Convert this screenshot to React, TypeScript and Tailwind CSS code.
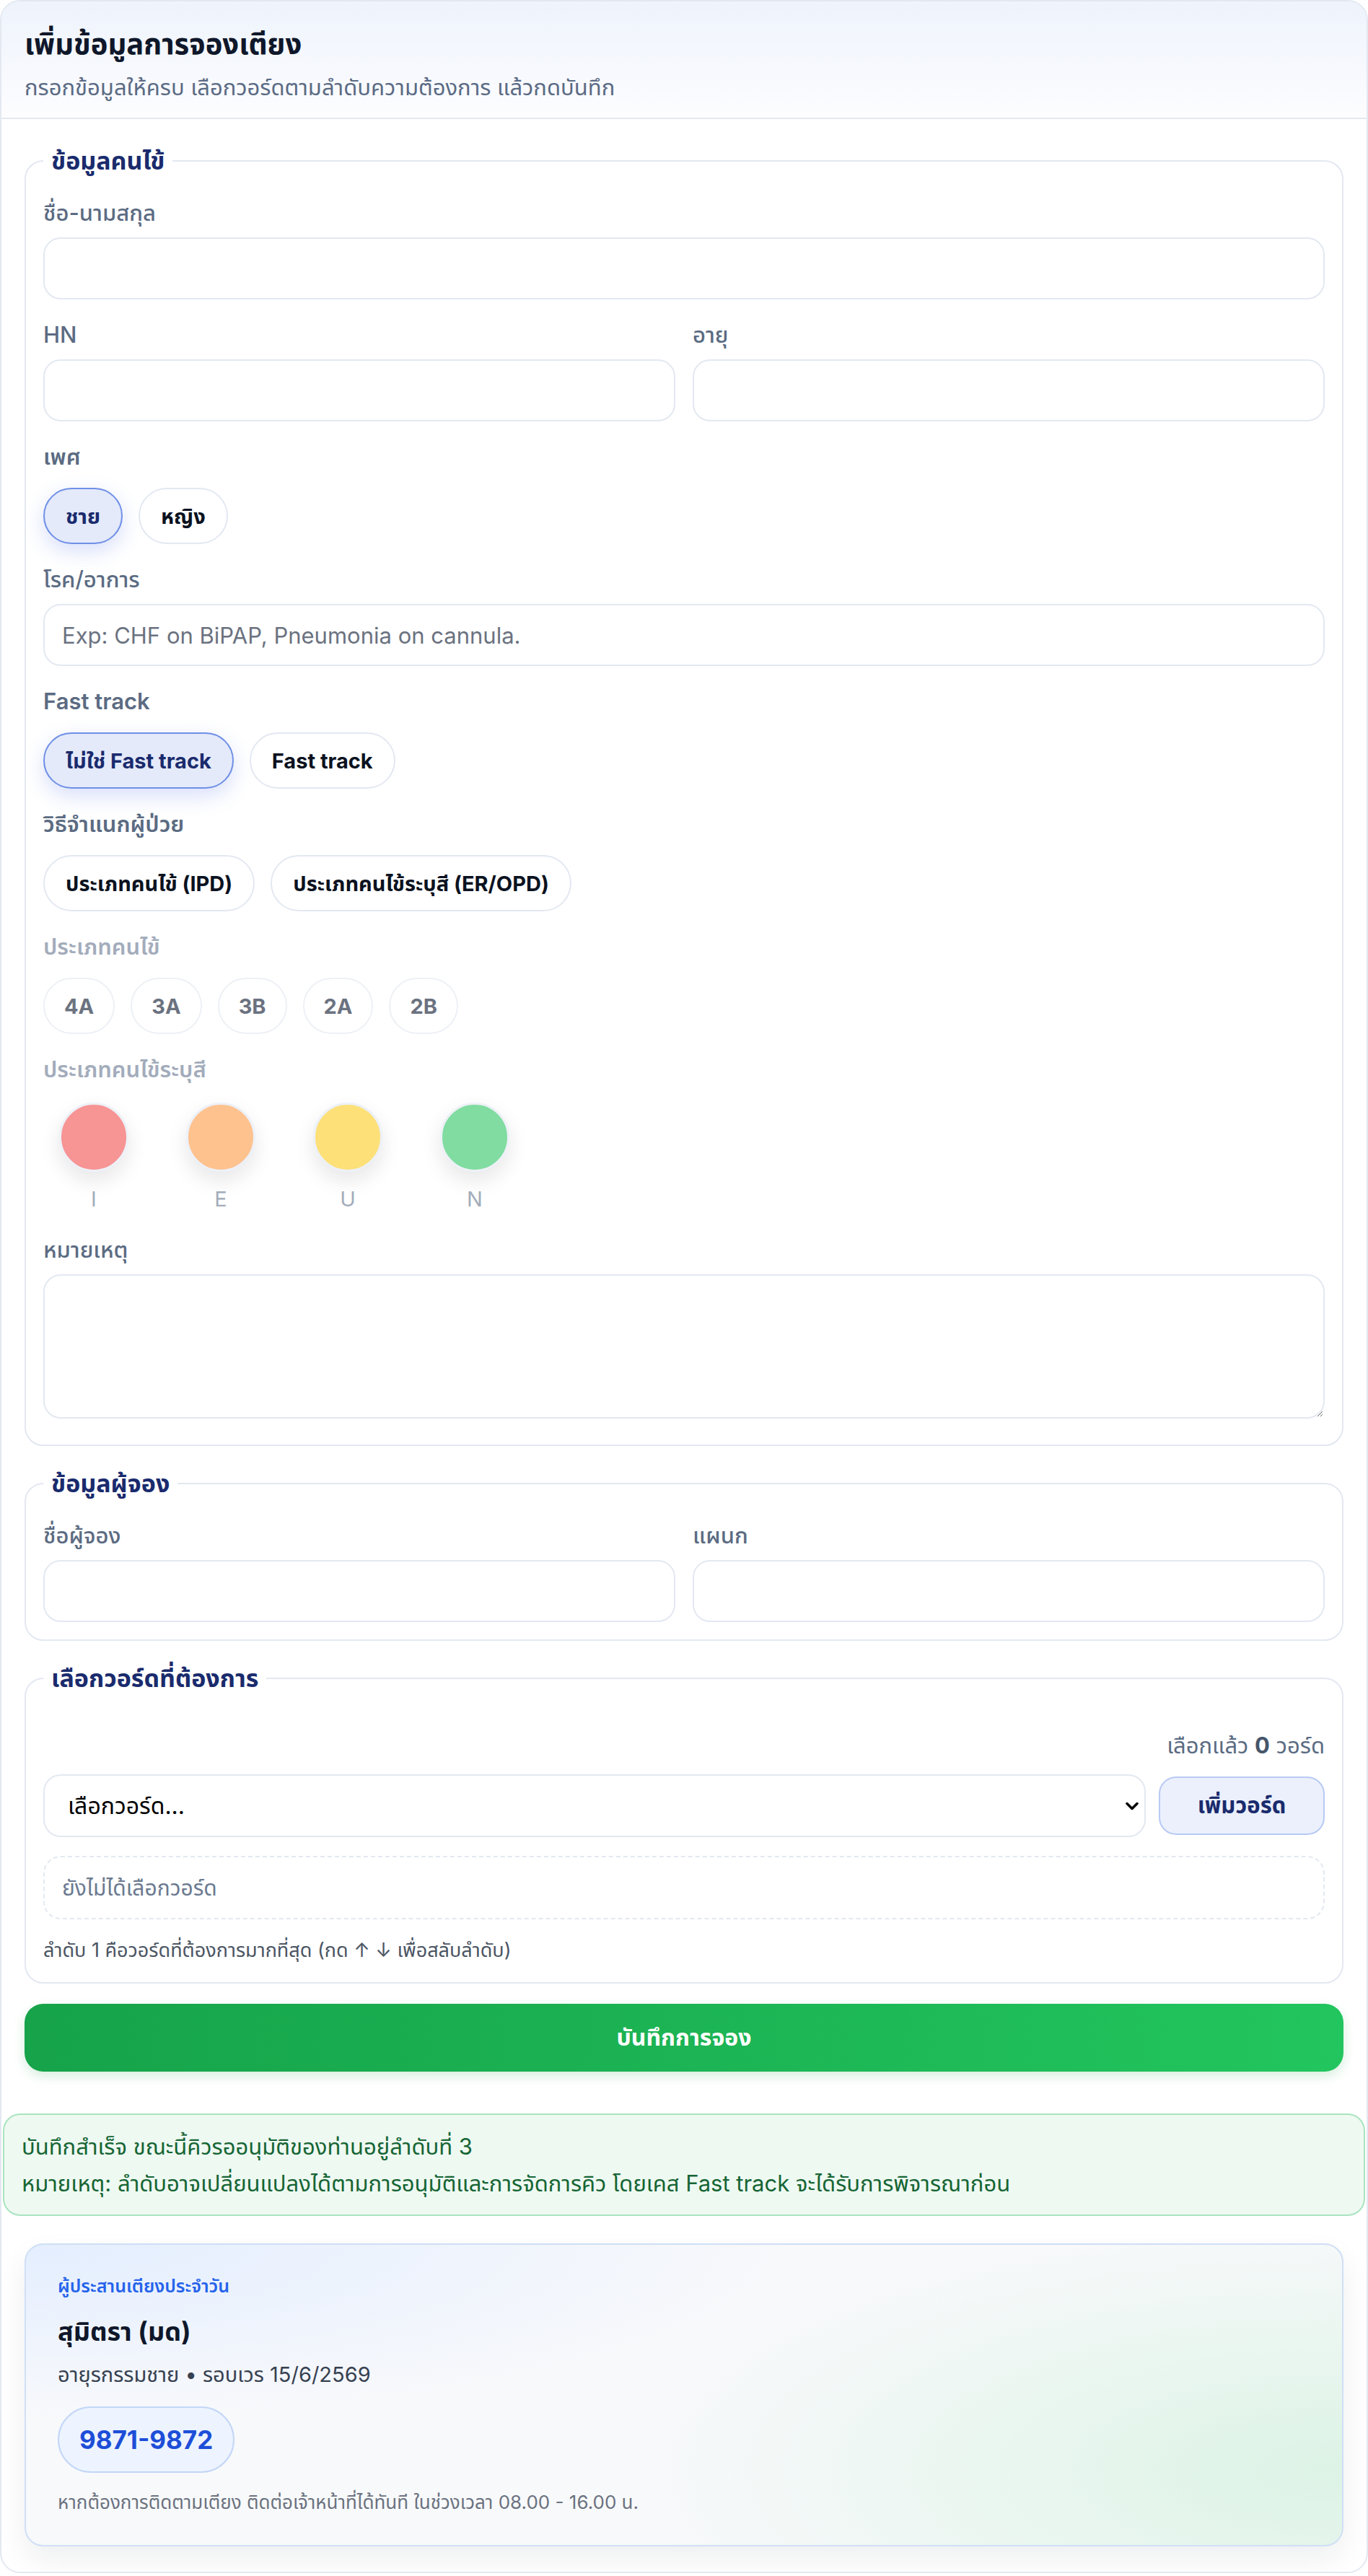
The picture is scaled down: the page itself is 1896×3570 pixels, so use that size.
import React from "react";

const FONT = "font-['Inter','Noto_Sans_Thai','Noto_Sans','Liberation_Sans',sans-serif]";

const fieldLabel = "block text-[31px] leading-[45px] font-medium text-[#5b6b82]";
const groupLabel = "block text-[31px] leading-[45px] font-semibold text-[#5b6b82]";
const mutedLabel = "block text-[31px] leading-[45px] font-semibold text-[#a3acbb]";
const inputCls =
  "block w-full h-[86px] rounded-[24px] border-2 border-[#e3e8f1] bg-white px-[24px] text-[31px] text-[#0f172a] placeholder:text-[#6b7280] outline-none";

function Field({ label, placeholder }: { label: string; placeholder?: string }) {
  return (
    <div>
      <label className={fieldLabel}>{label}</label>
      <input className={`${inputCls} mt-[12px]`} placeholder={placeholder} />
    </div>
  );
}

type PillState = "active" | "idle" | "disabled";

function Pill({ children, state = "idle" }: { children: React.ReactNode; state?: PillState }) {
  const base = "h-[78px] rounded-full border-2 text-[29px] font-bold leading-none flex items-center";
  const look =
    state === "active"
      ? "px-[29px] border-[#6f8fe6] bg-[#e4eafa] text-[#1a2b6d] shadow-[0_10px_28px_rgba(79,109,230,0.22)]"
      : state === "disabled"
      ? "px-[27px] border-[#edf0f5] bg-white text-[#6b7280]"
      : "px-[29px] border-[#e3e8f1] bg-white text-[#0b1220]";
  return (
    <button type="button" className={`${base} ${look}`}>
      {children}
    </button>
  );
}

function Group({
  label,
  muted,
  children,
}: {
  label: string;
  muted?: boolean;
  children: React.ReactNode;
}) {
  return (
    <div>
      <div className={muted ? mutedLabel : groupLabel}>{label}</div>
      <div className="mt-[21px] flex gap-[22px]">{children}</div>
    </div>
  );
}

function Section({
  title,
  children,
  className = "",
}: {
  title: string;
  children: React.ReactNode;
  className?: string;
}) {
  return (
    <fieldset className={`rounded-[26px] border-2 border-[#e3e8f1] px-[24px] ${className}`}>
      <legend className="px-[11px] text-[34px] leading-[48px] font-bold text-[#1a2b6d]">{title}</legend>
      {children}
    </fieldset>
  );
}

const colorTypes = [
  { key: "I", bg: "bg-[#f79494]" },
  { key: "E", bg: "bg-[#fec28f]" },
  { key: "U", bg: "bg-[#fde078]" },
  { key: "N", bg: "bg-[#80dca0]" },
];

export default function App() {
  return (
    <div className={`min-h-screen bg-white ${FONT}`}>
      <div className="rounded-[28px] border-2 border-[#e3e8f1] bg-white overflow-hidden">
        {/* Header */}
        <header className="border-b-2 border-[#e3e8f1] bg-linear-to-b from-[#eef3fc] to-[#fdfdff] px-[32px] pt-[31px] pb-[20px]">
          <h1 className="text-[40px] leading-[56px] font-bold text-[#0f172a]">เพิ่มข้อมูลการจองเตียง</h1>
          <p className="mt-[9px] text-[31px] leading-[45px] text-[#5b6b85]">
            กรอกข้อมูลให้ครบ เลือกวอร์ดตามลำดับความต้องการ แล้วกดบันทึก
          </p>
        </header>

        <form className="flex flex-col gap-[28px] px-[32px] pt-[34px] pb-[32px]">
          {/* Patient */}
          <Section title="ข้อมูลคนไข้" className="pt-[25px] pb-[36px]">
            <div className="flex flex-col gap-[26px]">
              <Field label="ชื่อ-นามสกุล" />
              <div className="grid grid-cols-2 gap-[24px]">
                <Field label="HN" />
                <Field label="อายุ" />
              </div>
              <Group label="เพศ">
                <Pill state="active">ชาย</Pill>
                <Pill>หญิง</Pill>
              </Group>
              <Field label="โรค/อาการ" placeholder="Exp: CHF on BiPAP, Pneumonia on cannula." />
              <Group label="Fast track">
                <Pill state="active">ไม่ใช่ Fast track</Pill>
                <Pill>Fast track</Pill>
              </Group>
              <Group label="วิธีจำแนกผู้ป่วย">
                <Pill>ประเภทคนไข้ (IPD)</Pill>
                <Pill>ประเภทคนไข้ระบุสี (ER/OPD)</Pill>
              </Group>
              <Group label="ประเภทคนไข้" muted>
                {["4A", "3A", "3B", "2A", "2B"].map((t) => (
                  <Pill key={t} state="disabled">
                    {t}
                  </Pill>
                ))}
              </Group>
              <div>
                <div className={mutedLabel}>ประเภทคนไข้ระบุสี</div>
                <div className="mt-[24px] flex gap-[36px]">
                  {colorTypes.map((c) => (
                    <button key={c.key} type="button" className="flex w-[140px] flex-col items-center">
                      <span
                        className={`block size-[96px] rounded-full border-[3px] border-[#edf1f7] ${c.bg} shadow-[0_12px_28px_rgba(15,23,42,0.10)]`}
                      />
                      <span className="mt-[17px] text-[29px] leading-[42px] text-[#a3acba]">{c.key}</span>
                    </button>
                  ))}
                </div>
              </div>
              <div>
                <label className={fieldLabel}>หมายเหตุ</label>
                <textarea className="mt-[12px] block h-[200px] w-full rounded-[24px] border-2 border-[#e3e8f1] bg-white px-[24px] py-[16px] text-[31px] outline-none" />
              </div>
            </div>
          </Section>

          {/* Booker */}
          <Section title="ข้อมูลผู้จอง" className="pt-[25px] pb-[24px]">
            <div className="grid grid-cols-2 gap-[24px]">
              <Field label="ชื่อผู้จอง" />
              <Field label="แผนก" />
            </div>
          </Section>

          {/* Wards */}
          <Section title="เลือกวอร์ดที่ต้องการ" className="pt-[46px] pb-[24px]">
            <div className="text-right text-[31px] leading-[45px] text-[#5b6b82]">
              เลือกแล้ว <span className="font-bold text-[#475569]">0</span> วอร์ด
            </div>
            <div className="mt-[18px] flex items-center gap-[18px]">
              <div className="relative flex-1">
                <select className="block h-[87px] w-full appearance-none rounded-[24px] border-2 border-[#e3e8f1] bg-white pl-[32px] pr-[48px] text-[32px] text-black outline-none">
                  <option>เลือกวอร์ด...</option>
                </select>
                <svg
                  className="pointer-events-none absolute right-[10px] top-1/2 -translate-y-1/2"
                  width="18"
                  height="12"
                  viewBox="0 0 18 12"
                  fill="none"
                >
                  <path d="M2 2.5 9 9.5 16 2.5" stroke="#000" strokeWidth="3.5" strokeLinecap="round" strokeLinejoin="round" />
                </svg>
              </div>
              <button
                type="button"
                className="h-[81px] w-[230px] rounded-[24px] border-2 border-[#b8c9f3] bg-[#ebf0fc] text-[31px] font-bold text-[#1a2b6d]"
              >
                เพิ่มวอร์ด
              </button>
            </div>
            <div className="mt-[26px] flex h-[88px] items-center rounded-[24px] border-2 border-dashed border-[#e3e8f1] px-[24px] text-[30px] text-[#6b7a90]">
              ยังไม่ได้เลือกวอร์ด
            </div>
            <p className="mt-[23px] text-[27px] leading-[40px] text-[#4b5563]">
              ลำดับ 1 คือวอร์ดที่ต้องการมากที่สุด (กด ↑ ↓ เพื่อสลับลำดับ)
            </p>
          </Section>

          <button
            type="button"
            className="h-[94px] w-full rounded-[26px] bg-linear-to-r from-[#16a34a] to-[#22c55e] text-[32px] font-bold text-white shadow-[0_6px_16px_rgba(22,163,74,0.18)]"
          >
            บันทึกการจอง
          </button>
        </form>

        {/* Success notice */}
        <div className="mx-[2px] mt-[26px] rounded-[24px] border-2 border-[#a9e4bf] bg-[#eef9f2] px-[24px] py-[18px] text-[31px] leading-[51px] text-[#166534]">
          <p>บันทึกสำเร็จ ขณะนี้คิวรออนุมัติของท่านอยู่ลำดับที่ 3</p>
          <p>หมายเหตุ: ลำดับอาจเปลี่ยนแปลงได้ตามการอนุมัติและการจัดการคิว โดยเคส Fast track จะได้รับการพิจารณาก่อน</p>
        </div>

        {/* Daily coordinator */}
        <div className="px-[32px] pt-[38px] pb-[35px]">
          <div className="rounded-[26px] border-2 border-[#cfdff6] bg-[#f8f9fb] bg-[image:radial-gradient(ellipse_at_top_left,#e4eeff_0%,rgba(255,255,255,0)_42%),radial-gradient(ellipse_90%_140%_at_100%_75%,#dcf3e5_0%,rgba(255,255,255,0)_60%)] px-[44px] pt-[40px] pb-[40px] shadow-[0_18px_40px_rgba(15,23,42,0.07)]">
            <div className="text-[25px] leading-[34px] font-semibold text-[#2563eb]">ผู้ประสานเตียงประจำวัน</div>
            <div className="mt-[21px] text-[36px] leading-[50px] font-bold text-[#0f172a]">สุมิตรา (มด)</div>
            <div className="mt-[14px] text-[29px] leading-[42px] text-[#374151]">อายุรกรรมชาย • รอบเวร 15/6/2569</div>
            <div className="mt-[23px] inline-flex h-[92px] items-center rounded-full border-2 border-[#c3d6f7] bg-[#edf4ff] px-[28px] text-[35px] font-bold text-[#1d4ed8]">
              9871-9872
            </div>
            <p className="mt-[22px] text-[26px] leading-[38px] text-[#6b7280]">
              หากต้องการติดตามเตียง ติดต่อเจ้าหน้าที่ได้ทันที ในช่วงเวลา 08.00 - 16.00 น.
            </p>
          </div>
        </div>
      </div>
    </div>
  );
}
